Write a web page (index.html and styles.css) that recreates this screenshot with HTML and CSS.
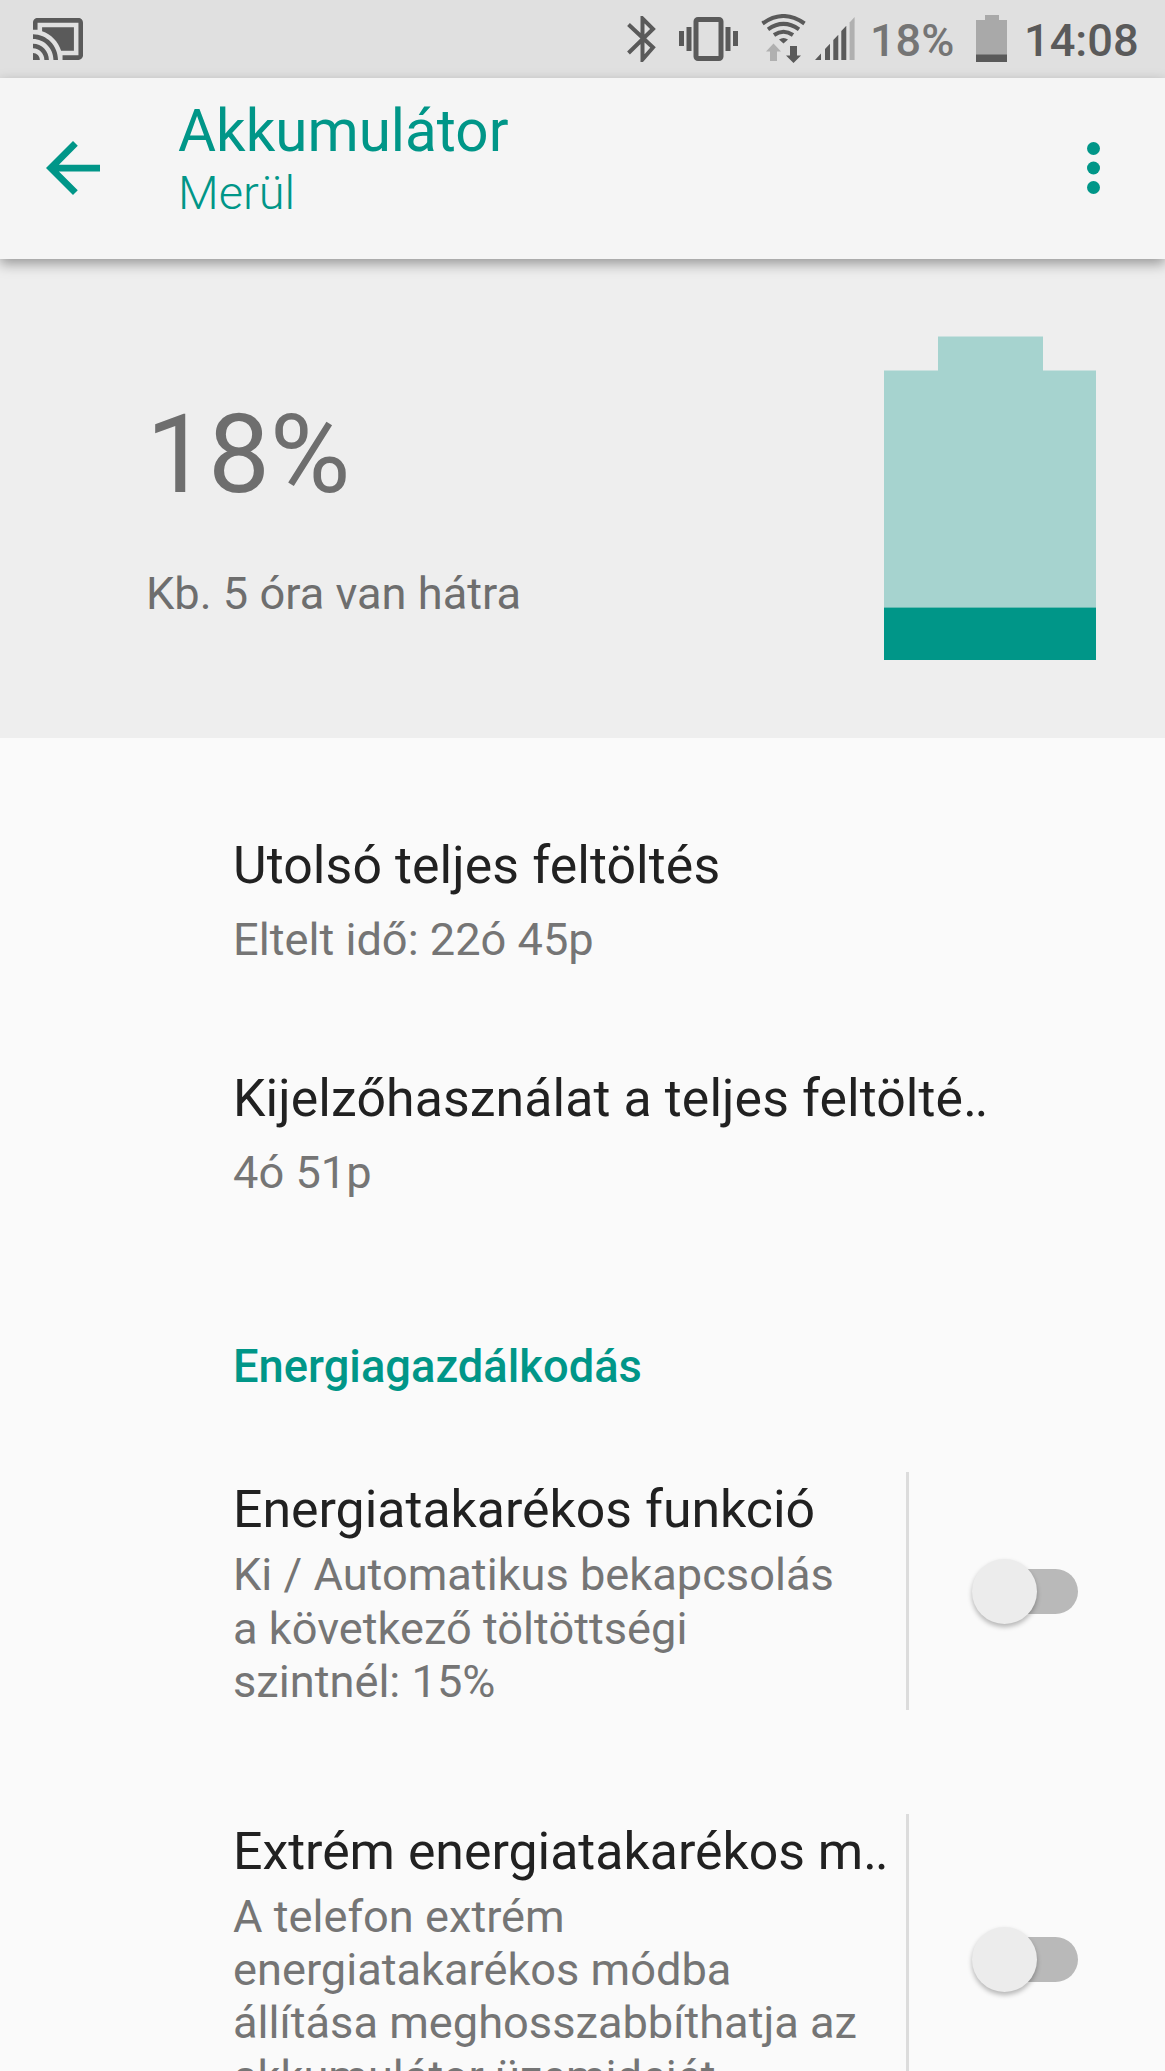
FILE: index.html
```
<!DOCTYPE html>
<html lang="hu">
<head>
    <meta charset="UTF-8">
    <meta name="viewport" content="width=device-width, initial-scale=1.0">
    <title>Akkumulátor</title>
    <link rel="stylesheet" href="styles.css">
</head>
<body>
    <div class="status-bar">
        <svg class="icon-cast" viewBox="1 3 22 18" preserveAspectRatio="none">
            <path d="M1 18v3h3c0-1.66-1.34-3-3-3zm0-4v2c2.76 0 5 2.24 5 5h2c0-3.87-3.13-7-7-7zM19 7H5v1.63c3.96 1.28 7.09 4.41 8.37 8.37H19V7zM1 10v2c4.97 0 9 4.03 9 9h2c0-6.08-4.93-11-11-11zM21 3H3c-1.1 0-2 .9-2 2v3h2V5h18v14h-7v2h7c1.1 0 2-.9 2-2V5c0-1.1-.9-2-2-2z"/>
        </svg>
        <div class="status-right">
            <svg class="icon-bluetooth" viewBox="0 0 29 46">
                <path d="M1.5 8.5L26 31.5L15.5 43.5V2.5L26 13L1.5 37" fill="none" stroke="#5a5a5a" stroke-width="4"/>
            </svg>
            <svg class="icon-vibrate" viewBox="0 0 59 44">
                <rect x="17" y="2.5" width="25" height="39" rx="2" fill="none" stroke="#5a5a5a" stroke-width="5"/>
                <path d="M0 14h5v15H0zM7.500 10h5v24h-5zM46.500 10h5v24h-5zM54 14h5v15h-5z"/>
            </svg>
            <svg class="icon-wifi" viewBox="0 0 46 49">
                <g fill="none" stroke="#5a5a5a" stroke-width="4">
                    <path d="M1.500 9.500Q22.500 -5.500 43.500 9.500"/>
                    <path d="M7 15.300Q22.500 4.500 38 15.300"/>
                    <path d="M13 21Q22.500 14.500 32 21"/>
                </g>
                <path d="M18 25.500Q22.500 22.500 27 25.500L22.500 29.500z"/>
                <path class="dim" d="M12.500 29.500L20 37.500h-4V47H9v-9.500H5z"/>
                <path d="M29 32h7v9.500h4L32.500 49L25 41.500h4z"/>
            </svg>
            <svg class="icon-signal" viewBox="0 0 40 43">
                <path d="M0 43l6-6.500V43zM10 43V32l5-5.200V43zM18.300 43V23l5-5.200V43zM26.300 43V14l5-5.200V43z"/>
                <path class="dim" d="M34.600 43V5.500l5-5.500v43z"/>
            </svg>
            <span class="status-percent">18%</span>
            <svg class="icon-battery" viewBox="0 0 31 47">
                <path class="level-empty" d="M9 0h14v5h8v35H0V5h9z"/>
                <path d="M0 39.500h31V47H0z"/>
            </svg>
            <span class="status-time">14:08</span>
        </div>
    </div>

    <header class="app-bar">
        <svg class="icon-back" viewBox="4 4 16 16">
            <path d="M20 11H7.830l5.590-5.590L12 4l-8 8 8 8 1.410-1.410L7.830 13H20v-2z"/>
        </svg>
        <div class="app-titles">
            <h1>Akkumulátor</h1>
            <p>Merül</p>
        </div>
        <svg class="icon-more" viewBox="0 0 13 52">
            <circle cx="6.500" cy="6.500" r="6.500"/>
            <circle cx="6.500" cy="26" r="6.500"/>
            <circle cx="6.500" cy="45.500" r="6.500"/>
        </svg>
    </header>

    <section class="summary">
        <div class="summary-text">
            <div class="level">18%</div>
            <div class="remaining">Kb. 5 óra van hátra</div>
        </div>
        <svg class="battery" viewBox="0 0 212 324">
            <path class="battery-empty" d="M54 .5h105V34.500h53v237H0V34.500h54z"/>
            <path class="battery-level" d="M0 271.500h212v52.500H0z"/>
        </svg>
    </section>

    <main>
        <div class="item">
            <h2>Utolsó teljes feltöltés</h2>
            <p>Eltelt idő: 22ó 45p</p>
        </div>
        <div class="item">
            <h2>Kijelzőhasználat a teljes feltölté<span class="dots">..</span></h2>
            <p>4ó 51p</p>
        </div>

        <h3 class="category">Energiagazdálkodás</h3>

        <div class="switch-item">
            <div class="switch-text">
                <h2>Energiatakarékos funkció</h2>
                <p>Ki / Automatikus bekapcsolás<br>a következő töltöttségi<br>szintnél: 15%</p>
            </div>
            <div class="switch"><span class="knob"></span></div>
        </div>
        <div class="switch-item">
            <div class="switch-text">
                <h2>Extrém energiatakarékos m<span class="dots">..</span></h2>
                <p>A telefon extrém<br>energiatakarékos módba<br>állítása meghosszabbíthatja az<br>akkumulátor üzemidejét.</p>
            </div>
            <div class="switch"><span class="knob"></span></div>
        </div>
    </main>
</body>
</html>
```
FILE: styles.css
```
:root {
    --accent: #009688;
    --icon: #5a5a5a;
    --text: #212121;
    --muted: #757575;
}

* {
    margin: 0;
    padding: 0;
    box-sizing: border-box;
}

body {
    height: 2071px;
    overflow: hidden;
    font-family: Roboto, sans-serif;
    background-color: #fafafa;
    color: var(--text);
}

svg {
    display: block;
    flex: none;
}

/* Status bar */
.status-bar {
    display: flex;
    justify-content: space-between;
    height: 78px;
    padding: 0 27px 0 33px;
    background-color: #e0e0e0;
    fill: var(--icon);
}

.status-right {
    display: flex;
}

.icon-cast {
    width: 50px;
    height: 42px;
    margin-top: 18px;
}

.icon-bluetooth {
    width: 29px;
    height: 46px;
    margin: 16px 23px 0 0;
}

.icon-vibrate {
    width: 59px;
    height: 44px;
    margin: 17px 23px 0 0;
}

.icon-wifi {
    width: 46px;
    height: 49px;
    margin: 14px 8px 0 0;
}

.icon-signal {
    width: 40px;
    height: 43px;
    margin: 17px 15px 0 0;
}

.dim {
    fill: #b0b0b0;
}

.level-empty {
    fill: #a9a9a9;
}

.status-percent,
.status-time {
    font-size: 45.2px;
    font-weight: 500;
    line-height: 53px;
    margin-top: 14px;
    white-space: nowrap;
}

.status-percent {
    width: 106px;
    font-size: 45px;
    color: var(--muted);
}

.icon-battery {
    width: 31px;
    height: 47px;
    margin: 15px 17px 0 0;
}

.status-time {
    width: 114px;
    color: var(--icon);
}

/* App bar */
.app-bar {
    position: relative;
    display: flex;
    align-items: center;
    height: 181px;
    padding: 0 65px 1px 46px;
    background-color: #f5f5f5;
    color: var(--accent);
    fill: var(--accent);
    box-shadow: 0 5px 12px rgba(0, 0, 0, 0.36);
}

.icon-back {
    width: 54px;
    height: 54px;
}

.app-titles {
    flex: 1;
    align-self: flex-start;
    padding: 19px 0 0 78px;
}

.app-titles h1 {
    font-size: 58.4px;
    font-weight: 400;
    line-height: 68px;
}

.app-titles p {
    font-size: 47px;
    font-weight: 300;
    line-height: 56px;
}

.icon-more {
    width: 13px;
    height: 52px;
}

/* Battery summary */
.summary {
    display: flex;
    justify-content: space-between;
    height: 479px;
    padding: 77px 69px 0 146px;
    background-color: #eeeeee;
    color: #6e6e6e;
}

.level {
    font-size: 110.2px;
    line-height: 130px;
    margin-top: 54px;
}

.remaining {
    font-size: 45.2px;
    line-height: 53px;
    margin-top: 47px;
}

.battery {
    width: 212px;
    height: 324px;
}

.battery-empty {
    fill: #a6d3cf;
}

.battery-level {
    fill: var(--accent);
}

/* Settings list */
main {
    padding: 98px 0 0 233px;
}

h2 {
    font-size: 51.8px;
    font-weight: 400;
    line-height: 60px;
    white-space: nowrap;
}

main p {
    font-size: 45.2px;
    line-height: 53.2px;
    color: var(--muted);
    white-space: nowrap;
}

.item {
    margin-bottom: 103px;
}

.item h2 {
    letter-spacing: 0.1px;
}

.item p {
    margin-top: 17px;
}

h2 .dots {
    letter-spacing: -2px;
}

.category {
    font-size: 45.3px;
    font-weight: 500;
    line-height: 53px;
    margin: 141px 0 79px;
    color: var(--accent);
}

.switch-item {
    display: flex;
    align-items: center;
    margin-bottom: 104px;
}

.switch-text {
    width: 676px;
    padding: 8px 0 2px;
    border-right: 3px solid #dcdcdc;
}

.switch-text p {
    margin-top: 8px;
}

.switch {
    position: relative;
    width: 95px;
    height: 45px;
    margin-left: 74px;
    border-radius: 23px;
    background-color: #b9b9b9;
}

.knob {
    position: absolute;
    left: -11px;
    top: -10px;
    width: 65px;
    height: 65px;
    border-radius: 50%;
    background-color: #ececec;
    box-shadow: 0 3px 5px rgba(0, 0, 0, 0.28);
}
```
